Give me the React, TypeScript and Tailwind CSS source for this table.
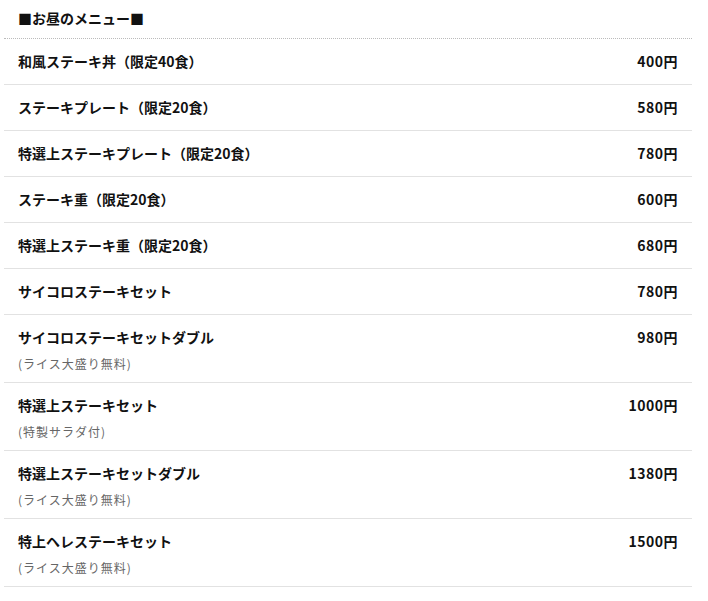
type Item = { name: string; price: string; note?: string };

const items: Item[] = [
  { name: "和風ステーキ丼（限定40食）", price: "400円" },
  { name: "ステーキプレート（限定20食）", price: "580円" },
  { name: "特選上ステーキプレート（限定20食）", price: "780円" },
  { name: "ステーキ重（限定20食）", price: "600円" },
  { name: "特選上ステーキ重（限定20食）", price: "680円" },
  { name: "サイコロステーキセット", price: "780円" },
  { name: "サイコロステーキセットダブル", price: "980円", note: "(ライス大盛り無料)" },
  { name: "特選上ステーキセット", price: "1000円", note: "(特製サラダ付)" },
  { name: "特選上ステーキセットダブル", price: "1380円", note: "(ライス大盛り無料)" },
  { name: "特上ヘレステーキセット", price: "1500円", note: "(ライス大盛り無料)" },
];

function MenuRow({ item }: { item: Item }) {
  return (
    <li className={`border-b border-[#e2e2e2] px-[14px] pt-[12px] ${item.note ? "pb-[10px]" : "pb-[12px]"}`}>
      <div className="flex justify-between items-center">
        <span className="text-[14px] leading-[21px] font-bold text-[#111]">{item.name}</span>
        <span className="text-[14px] leading-[21px] font-bold text-[#111] tracking-[0.5px]">{item.price}</span>
      </div>
      {item.note && (
        <p className="mt-[8px] text-[12px] leading-[16px] tracking-[1px] text-[#666]">{item.note}</p>
      )}
    </li>
  );
}

export default function App() {
  return (
    <div
      className="bg-white min-h-[601px] w-[708px]"
      style={{ fontFamily: '"Noto Sans CJK JP", "Noto Sans", sans-serif' }}
    >
      <div className="ml-[4px] w-[688px]">
        {/* 見出し */}
        <h2 className="px-[14px] pt-[8px] pb-[9px] text-[14px] leading-[21px] font-bold text-[#111] border-b border-dotted border-[#bbb]">
          ■お昼のメニュー■
        </h2>

        <ul>
          {items.map((item) => (
            <MenuRow key={item.name} item={item} />
          ))}
        </ul>
      </div>
    </div>
  );
}
